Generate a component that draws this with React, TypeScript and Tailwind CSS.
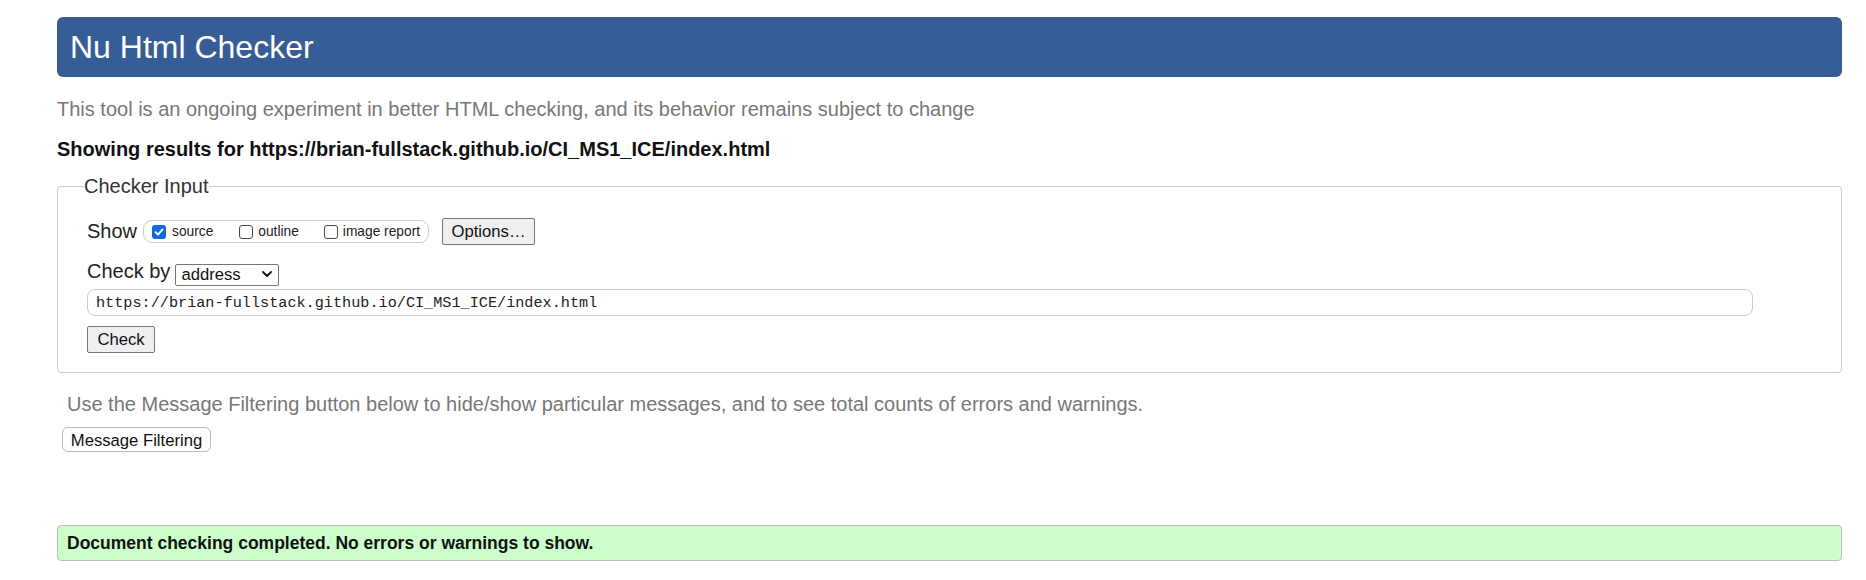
import React from "react";

function Chevron() {
  return (
    <svg
      width="10"
      height="6"
      viewBox="0 0 10 6"
      className="pointer-events-none absolute right-[7px] top-[8px]"
    >
      <path
        d="M1 1 L5 5 L9 1"
        fill="none"
        stroke="#111"
        strokeWidth="1.8"
        strokeLinecap="round"
        strokeLinejoin="round"
      />
    </svg>
  );
}

function Box({ checked }: { checked?: boolean }) {
  if (checked) {
    return (
      <span className="flex h-[14px] w-[14px] shrink-0 items-center justify-center rounded-[3px] bg-[#1269dc]">
        <svg width="10" height="10" viewBox="0 0 10 10">
          <path
            d="M1.6 5.2 L4 7.6 L8.6 2.4"
            fill="none"
            stroke="#fff"
            strokeWidth="1.9"
            strokeLinecap="round"
            strokeLinejoin="round"
          />
        </svg>
      </span>
    );
  }
  return <span className="block h-[14px] w-[14px] shrink-0 rounded-[3px] border border-[#4a4a4a] bg-white" />;
}

export default function App() {
  return (
    <div className="min-h-[580px] w-full bg-white pl-[57px] pr-[24px] pt-[17px] font-['Liberation_Sans',Arial,sans-serif]">
      <header className="flex h-[60px] items-center rounded-[6px] bg-[#375d96] pl-[13px]">
        <h1 className="text-[32px] leading-[37px] text-white">Nu Html Checker</h1>
      </header>

      <p className="mt-[21px] text-[20px] leading-[23px] text-[#777]">
        This tool is an ongoing experiment in better HTML checking, and its behavior remains subject to change
      </p>

      <p className="mt-[17px] text-[20px] font-bold leading-[23px] text-[#111]">
        Showing results for https://brian-fullstack.github.io/CI_MS1_ICE/index.html
      </p>

      <fieldset className="mt-[14px] rounded-[4px] border border-[#cccccc]">
        <legend className="ml-[26px] text-[20px] leading-[23px] text-[#333]">Checker Input</legend>
        <div className="pb-[19px] pl-[29px] pr-[88px]">
          <div className="mt-[20px] flex h-[27px] items-center">
            <span className="text-[20px] leading-[23px] text-[#222]">Show</span>
            <div className="ml-[6px] flex h-[23px] items-center rounded-[9px] border border-[#cfcfcf] pl-[8px] pr-[8px] text-[13.75px] leading-[16px] text-[#222]">
              <label className="flex items-center">
                <Box checked />
                <span className="ml-[6px]">source</span>
              </label>
              <label className="ml-[26px] flex items-center">
                <Box />
                <span className="ml-[5px]">outline</span>
              </label>
              <label className="ml-[25px] flex items-center">
                <Box />
                <span className="ml-[5px]">image report</span>
              </label>
            </div>
            <button className="ml-[13px] h-[27px] w-[93px] rounded-[2px] border border-[#767676] bg-[#efefef] text-[16.67px] text-[#111]">
              Options…
            </button>
          </div>

          <div className="mt-[15px] flex h-[25px] items-start">
            <span className="text-[20px] leading-[23px] text-[#222]">Check by</span>
            <div className="relative ml-[5px] mt-[3px] h-[22px] w-[104px]">
              <select
                defaultValue="address"
                className="h-[22px] w-[104px] appearance-none rounded-[2px] border border-[#767676] bg-white pl-[5px] text-[16.67px] leading-[20px] text-[#111]"
              >
                <option value="address">address</option>
                <option value="file">file upload</option>
                <option value="text">text input</option>
              </select>
              <Chevron />
            </div>
          </div>

          <input
            readOnly
            defaultValue="https://brian-fullstack.github.io/CI_MS1_ICE/index.html"
            className="mt-[4px] block h-[27px] w-full rounded-[8px] border border-[#cccccc] bg-white pl-[8px] font-['Liberation_Mono',monospace] text-[15.2px] text-[#222] outline-none"
          />

          <button className="mt-[10px] block h-[27px] w-[68px] rounded-[2px] border border-[#767676] bg-[#efefef] text-[16.67px] text-[#111]">
            Check
          </button>
        </div>
      </fieldset>

      <p className="ml-[10px] mt-[20px] text-[20px] leading-[23px] text-[#777]">
        Use the Message Filtering button below to hide/show particular messages, and to see total counts of errors and warnings.
      </p>

      <button className="ml-[5px] mt-[11px] block h-[25px] w-[149px] rounded-[6px] border border-[#bbbbbb] bg-white text-[16.67px] text-[#111]">
        Message Filtering
      </button>

      <div className="mt-[73px] flex h-[36px] items-center rounded-[4px] border border-[#bbbbbb] bg-[#ccffcc] pl-[9px]">
        <p className="text-[17.5px] font-bold leading-[20px] text-[#111]">
          Document checking completed. No errors or warnings to show.
        </p>
      </div>
    </div>
  );
}
